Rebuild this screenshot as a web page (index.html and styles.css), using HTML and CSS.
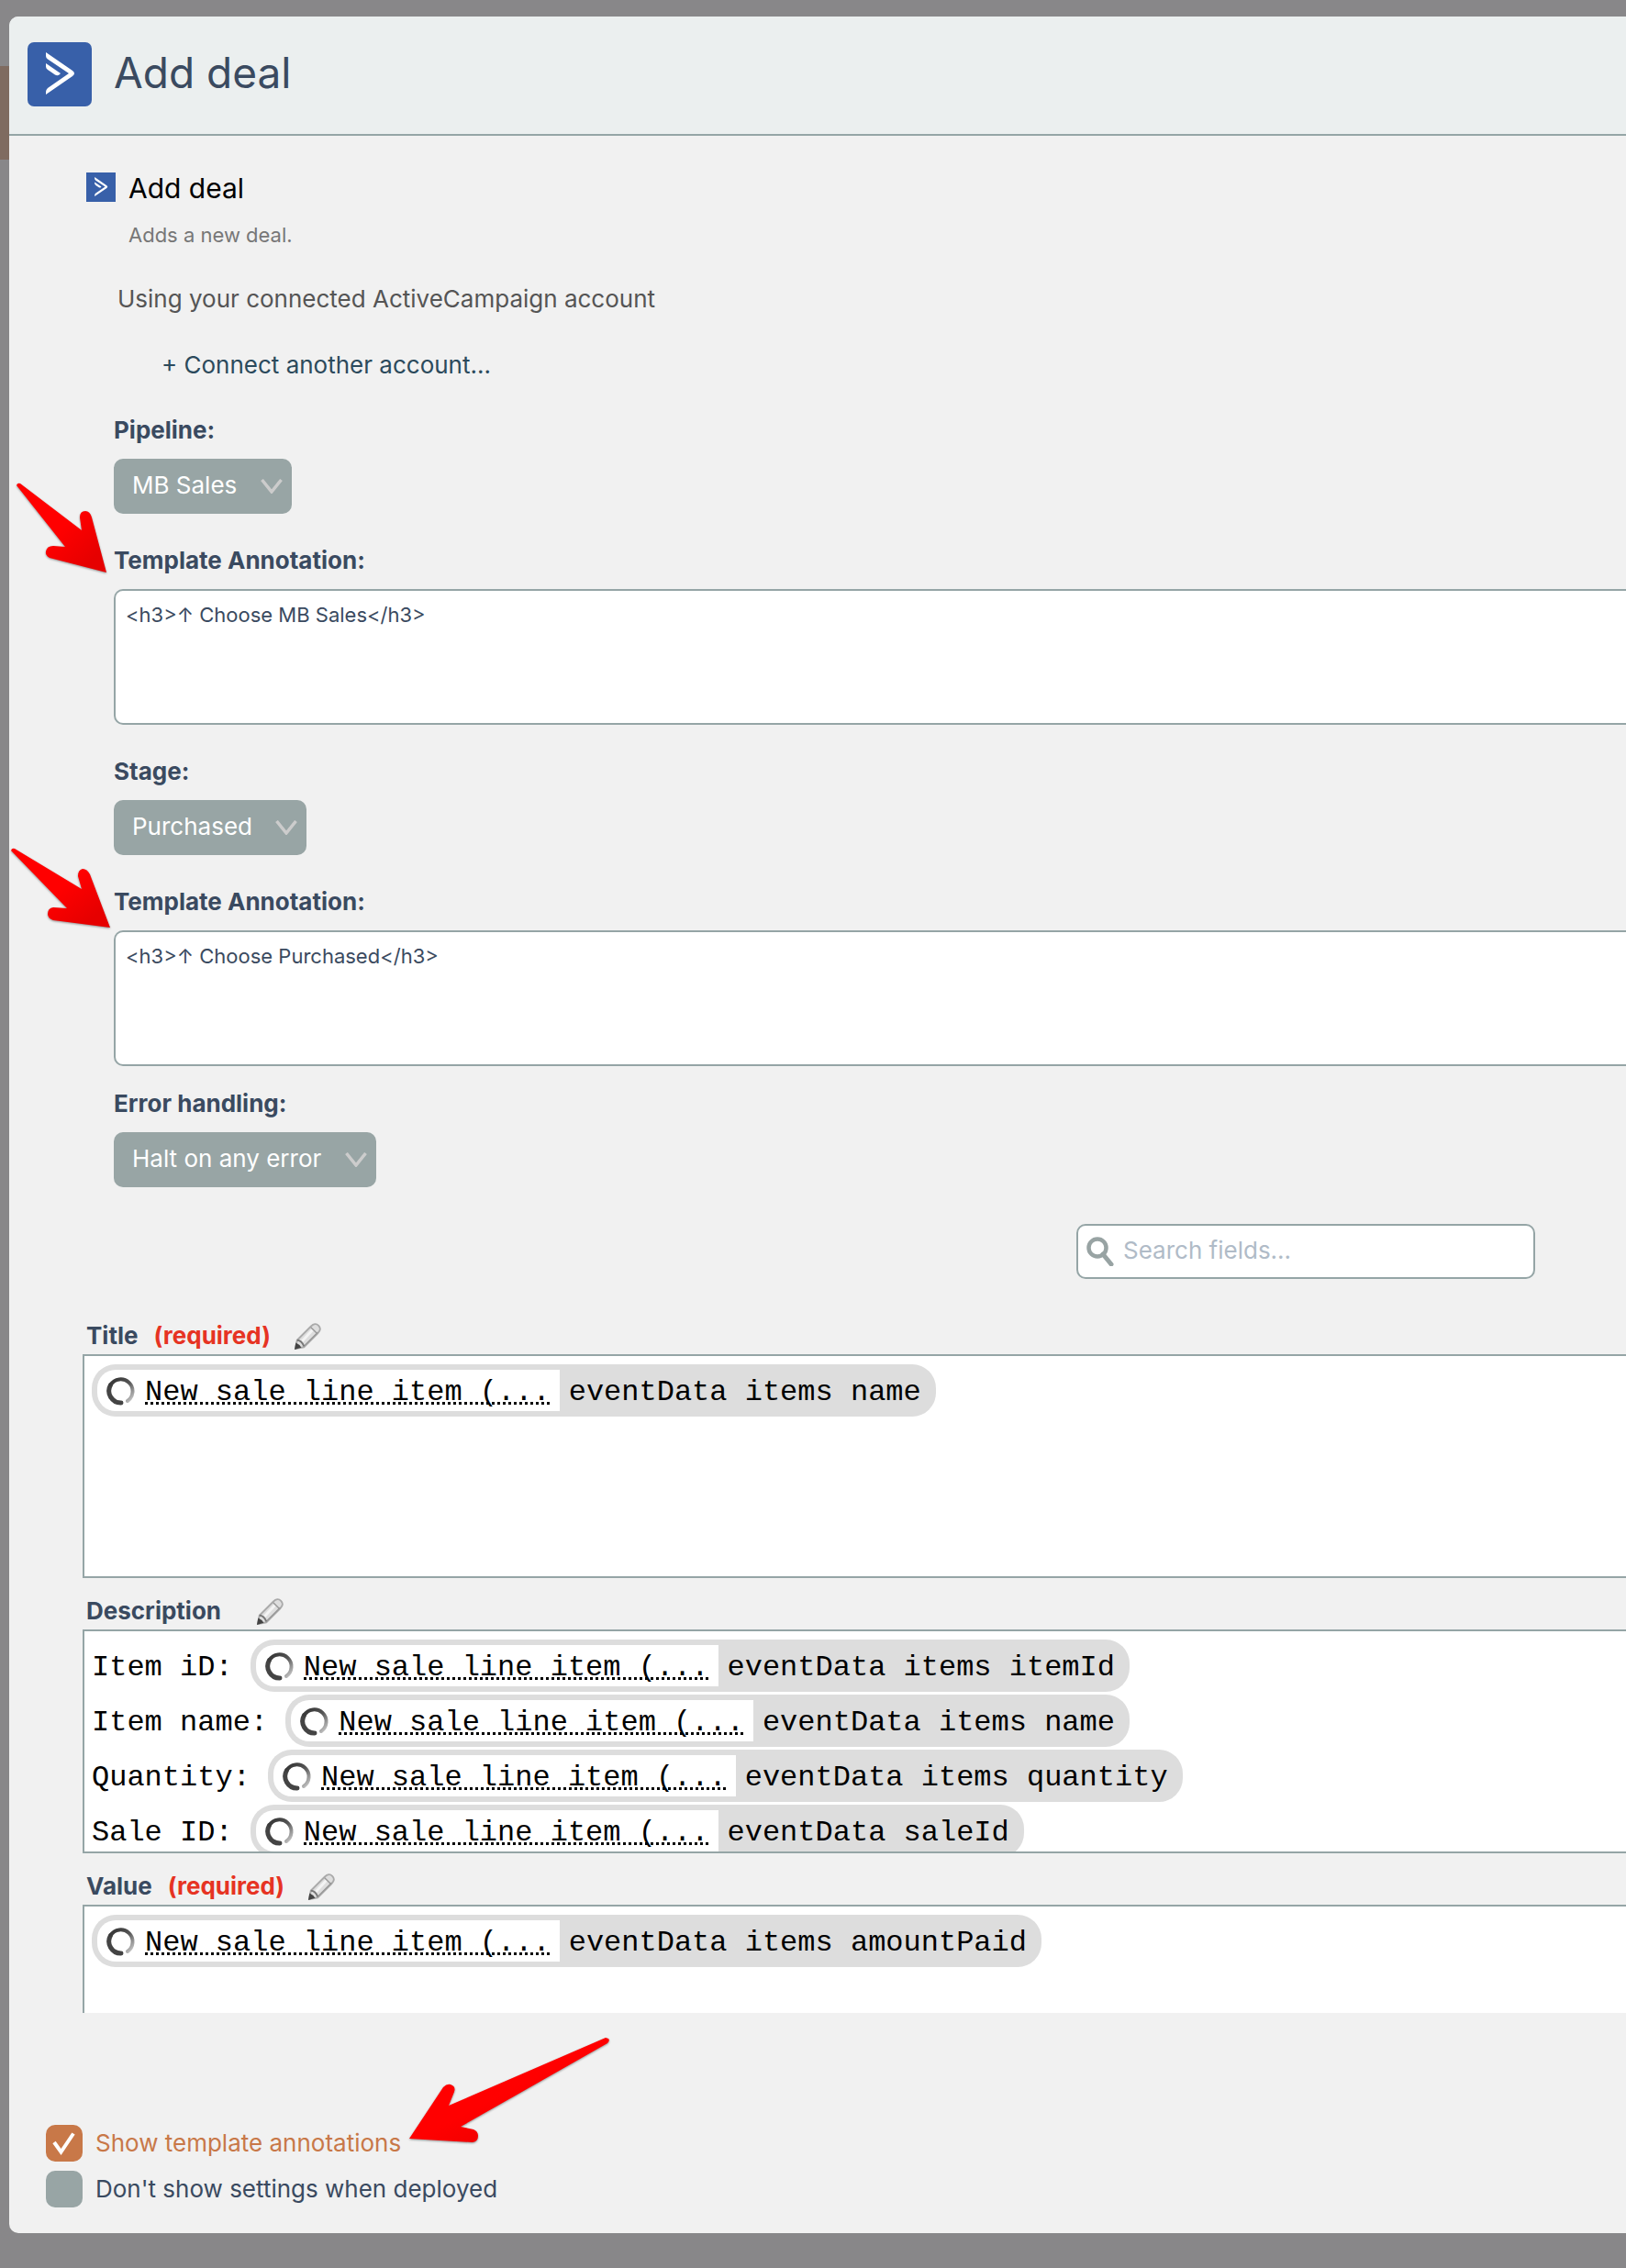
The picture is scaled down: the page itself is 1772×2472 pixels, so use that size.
FILE: index.html
```
<!DOCTYPE html>
<html lang="en">
<head>
<meta charset="utf-8">
<meta name="viewport" content="width=device-width, initial-scale=1">
<title>Add deal</title>
<link rel="stylesheet" href="styles.css">
</head>
<body>
<svg class="defs" width="0" height="0" aria-hidden="true">
  <defs>
    <linearGradient id="spin" x1="0" y1="0" x2="1" y2="1">
      <stop offset="0" stop-color="#333"/>
      <stop offset="0.5" stop-color="#555"/>
      <stop offset="1" stop-color="#ccc"/>
    </linearGradient>
    <linearGradient id="red" x1="0" y1="0" x2="1" y2="1">
      <stop offset="0.5" stop-color="#ff0000"/>
      <stop offset="0.85" stop-color="#e60000"/>
    </linearGradient>
    <symbol id="logo" viewBox="0 0 70 70">
      <path fill="#fff" d="M20 11 49 31Q53 34 49 37L20 57V54Q20 52 22 50L45 34 22 18.500Q20 17 20 15Z"/>
      <path fill="#fff" d="M20 23 36 34 34.500 35.500Q32.500 37 30 35.500L22 30Q20 28.500 20 26.500Z"/>
    </symbol>
    <symbol id="chevron" viewBox="0 0 24 16">
      <path fill="none" stroke="#ccc" stroke-width="3.500" d="M1.500 1 12 14 22.500 1"/>
    </symbol>
    <symbol id="ring" viewBox="0 0 32 32">
      <path fill="none" stroke="#444" stroke-width="5" stroke-linecap="round" d="M16 29A13 13 0 0 1 4.500 9.500"/>
      <path fill="none" stroke="url(#spin)" stroke-width="4" stroke-linecap="round" d="M4.500 9.500A13 13 0 1 1 23 27"/>
    </symbol>
    <symbol id="pencil" viewBox="0 0 32 32">
      <path fill="#dedede" stroke="#aaa" stroke-width="2" stroke-linejoin="round" d="M2 30 4 20 20 4Q25 -1 29 3T28 12L12 28Z"/>
      <path fill="none" stroke="#f4f4f4" stroke-width="3" d="M10 21 22 8"/>
      <path fill="none" stroke="#999" stroke-width="1.500" d="M12 27 28 11M20 5 27 12"/>
      <path fill="none" stroke="#777" stroke-width="2" d="M4 20Q9 20 12 27"/>
      <path fill="#444" d="M1 31 2.500 23Q7 25 9 28.500Z"/>
    </symbol>
  </defs>
</svg>

<main class="modal">
  <header class="modal-head">
    <svg class="logo logo-large" aria-hidden="true"><use href="#logo"/></svg>
    <h1 class="modal-title">Add deal</h1>
  </header>

  <section class="intro">
    <svg class="logo logo-small" aria-hidden="true"><use href="#logo"/></svg>
    <div class="intro-text">
      <h2 class="intro-title">Add deal</h2>
      <p class="intro-note">Adds a new deal.</p>
    </div>
  </section>

  <form class="settings">
    <p class="account">Using your connected ActiveCampaign account</p>
    <a class="connect" href="#connect">+ Connect another account...</a>

    <div class="setting">
      <label class="label" for="pipeline">Pipeline:</label>
      <span class="picker"><select id="pipeline"><option>MB Sales</option></select><svg class="chevron" aria-hidden="true"><use href="#chevron"/></svg></span>
    </div>
    <div class="setting">
      <label class="label" for="note-pipeline">Template Annotation:</label>
      <textarea class="note" id="note-pipeline">&lt;h3&gt;↑ Choose MB Sales&lt;/h3&gt;</textarea>
    </div>
    <div class="setting">
      <label class="label" for="stage">Stage:</label>
      <span class="picker"><select id="stage"><option>Purchased</option></select><svg class="chevron" aria-hidden="true"><use href="#chevron"/></svg></span>
    </div>
    <div class="setting">
      <label class="label" for="note-stage">Template Annotation:</label>
      <textarea class="note" id="note-stage">&lt;h3&gt;↑ Choose Purchased&lt;/h3&gt;</textarea>
    </div>
    <div class="setting setting-close">
      <label class="label" for="errors">Error handling:</label>
      <span class="picker"><select id="errors"><option>Halt on any error</option></select><svg class="chevron" aria-hidden="true"><use href="#chevron"/></svg></span>
    </div>
  </form>

  <label class="search">
    <svg class="search-icon" viewBox="0 0 30 32" aria-hidden="true"><circle cx="12" cy="12" r="9.500" fill="none" stroke="#98a3a3" stroke-width="4.500"/><path d="M18 19 27 30" stroke="#98a3a3" stroke-width="5" stroke-linecap="round"/></svg>
    <input class="search-input" type="search" placeholder="Search fields..." aria-label="Search fields">
  </label>

  <section class="fields">
    <div class="field">
      <div class="field-head"><h3 class="field-name">Title</h3><span class="required">(required)</span><button class="edit" type="button" aria-label="Edit title"><svg class="pencil"><use href="#pencil"/></svg></button></div>
      <div class="box">
        <div class="line"><span class="token"><span class="source"><svg class="ring" aria-hidden="true"><use href="#ring"/></svg><span class="source-name">New sale line item (...</span></span><span class="path">eventData items name</span></span></div>
      </div>
    </div>
    <div class="field">
      <div class="field-head"><h3 class="field-name">Description</h3><span class="required"></span><button class="edit" type="button" aria-label="Edit description"><svg class="pencil"><use href="#pencil"/></svg></button></div>
      <div class="box">
        <div class="line"><span class="lead">Item iD: </span><span class="token"><span class="source"><svg class="ring" aria-hidden="true"><use href="#ring"/></svg><span class="source-name">New sale line item (...</span></span><span class="path">eventData items itemId</span></span></div>
        <div class="line"><span class="lead">Item name: </span><span class="token"><span class="source"><svg class="ring" aria-hidden="true"><use href="#ring"/></svg><span class="source-name">New sale line item (...</span></span><span class="path">eventData items name</span></span></div>
        <div class="line"><span class="lead">Quantity: </span><span class="token"><span class="source"><svg class="ring" aria-hidden="true"><use href="#ring"/></svg><span class="source-name">New sale line item (...</span></span><span class="path">eventData items quantity</span></span></div>
        <div class="line"><span class="lead">Sale ID: </span><span class="token"><span class="source"><svg class="ring" aria-hidden="true"><use href="#ring"/></svg><span class="source-name">New sale line item (...</span></span><span class="path">eventData saleId</span></span></div>
      </div>
    </div>
    <div class="field">
      <div class="field-head"><h3 class="field-name">Value</h3><span class="required">(required)</span><button class="edit" type="button" aria-label="Edit value"><svg class="pencil"><use href="#pencil"/></svg></button></div>
      <div class="box box-cut">
        <div class="line"><span class="token"><span class="source"><svg class="ring" aria-hidden="true"><use href="#ring"/></svg><span class="source-name">New sale line item (...</span></span><span class="path">eventData items amountPaid</span></span></div>
      </div>
    </div>
  </section>

  <footer class="options">
    <label class="option option-on"><input class="tick" type="checkbox" checked><svg class="check" viewBox="0 0 40 40" aria-hidden="true"><path fill="none" stroke="#fff" stroke-width="4" d="M9 19 16.500 29.500 30 9.500"/></svg><span>Show template annotations</span></label>
    <label class="option"><input class="tick" type="checkbox"><span>Don't show settings when deployed</span></label>
  </footer>
</main>

<svg class="arrow arrow-pipeline" viewBox="0 0 100 98" aria-hidden="true"><path fill="url(#red)" d="M1 3Q2 0 5 1L72 52 70 38Q70 31 76 31 81 31 83 38L99 98 37 82Q32 79 33 75 34 69 41 69L54 70Z"/></svg>
<svg class="arrow arrow-stage" viewBox="0 0 108 88" aria-hidden="true"><path fill="url(#red)" d="M0 3Q1 0 4 1L77 45 73 31Q73 24 78 23 83 23 86 29L108 87 46 79Q40 77 40 72 40 66 46 65L61 66Z"/></svg>
<svg class="arrow arrow-option" viewBox="0 0 218 114" aria-hidden="true"><path fill="url(#red)" d="M217 1Q219 3 216 6L56 97 70 100Q75 102 75 107 75 113 69 114L0 110 37 54Q41 50 45 51 51 53 49 59L43 74 214 0Z"/></svg>
</body>
</html>
```
FILE: styles.css
```
* { box-sizing: border-box; }

body {
  position: relative;
  margin: 0;
  padding: 18px 0 38px 10px;
  overflow-x: hidden;
  background: #888789;
  color: #3a4a60;
  font: 26px/32px Inter, "Liberation Sans", sans-serif;
}

/* strip of the page behind the dialog */
body::before {
  content: "";
  position: absolute;
  left: 0;
  top: 72px;
  width: 10px;
  height: 102px;
  background: #7f6b60;
}

h1, h2, h3, p { margin: 0; }
.defs { position: absolute; }
svg { display: block; }

.modal {
  display: flex;
  flex-direction: column;
  background: #f1f1f1;
  border-radius: 10px 0 0 10px;
}

.modal-head {
  display: flex;
  align-items: center;
  gap: 24px;
  height: 130px;
  padding: 0 20px 2px;
  background: #ebefef;
  border-bottom: 2px solid #95a5a6;
  border-radius: 10px 0 0 0;
}

.logo { flex: none; background: #3860a9; }
.logo-large { width: 70px; height: 70px; border-radius: 7px; }
.logo-small { width: 32px; height: 32px; }

.modal-title {
  padding-bottom: 4px;
  font-size: 46px;
  line-height: 56px;
  font-weight: 400;
}

.intro { display: flex; gap: 14px; padding: 40px 84px 0; }
.intro-title { font-size: 30px; line-height: 34px; font-weight: 400; color: #000; }
.intro-note { margin-top: 20px; font-size: 22px; line-height: 28px; color: #777; }

.settings {
  display: flex;
  flex-direction: column;
  align-items: flex-start;
  padding: 40px 0 0 114px;
}
.account { padding-left: 4px; color: #555; }
.connect {
  margin: 40px 0 4px;
  padding-left: 52px;
  color: #2c4a5c;
  text-decoration: none;
}

.setting {
  display: flex;
  flex-direction: column;
  align-items: flex-start;
  gap: 15px;
  width: 100%;
  margin-top: 35px;
}
.setting-close { margin-top: 25px; }
.label { font-weight: 700; }

.picker { display: grid; align-items: center; }
.picker > * { grid-area: 1 / 1; }
.picker select {
  appearance: none;
  height: 60px;
  margin: 0;
  padding: 0 59px 2px 20px;
  border: 0;
  border-radius: 10px;
  background: #98a5a5;
  color: #fff;
  font: inherit;
}
.chevron {
  width: 24px;
  height: 16px;
  margin-right: 10px;
  justify-self: end;
  pointer-events: none;
}

.note {
  display: block;
  width: 100%;
  height: 148px;
  padding: 12px 11px;
  border: 2px solid #95a5a6;
  border-right: 0;
  border-radius: 10px 0 0 10px;
  background: #fff;
  color: inherit;
  font: 22px/28px Inter, "Liberation Sans", sans-serif;
  resize: none;
}

.search {
  display: flex;
  align-items: center;
  gap: 10px;
  align-self: flex-end;
  width: 500px;
  height: 60px;
  margin: 40px 99px 0 0;
  padding: 0 9px;
  border: 2px solid #95a5a6;
  border-radius: 10px;
  background: #fff;
}
.search-icon { flex: none; width: 30px; height: 32px; }
.search-input {
  flex: 1;
  min-width: 0;
  padding: 0 0 2px;
  border: 0;
  outline: 0;
  background: none;
  font: inherit;
}
.search-input::placeholder { color: #b0bbc7; opacity: 1; }

.fields { padding: 26px 0 0 80px; }
.field-head {
  display: flex;
  align-items: flex-end;
  height: 56px;
  padding: 0 4px 4px;
}
.field-name { font-size: 26px; line-height: 32px; }
.required { margin: 0 24px 0 17px; color: #e63323; font-weight: 700; }
.required:empty { margin-right: 20px; }
.edit { padding: 0; border: 0; background: none; }
.pencil { width: 32px; height: 30px; }

.box {
  height: 244px;
  padding: 8px;
  overflow: hidden;
  border: 2px solid #95a5a6;
  border-right: 0;
  background: #fff;
  color: #000;
  font: 32px/40px "Liberation Mono", "Courier New", monospace;
}
.box-cut { height: 118px; border-bottom: 0; }

.line { display: flex; align-items: flex-start; height: 60px; padding-top: 1px; white-space: pre; }
.lead { padding-top: 11px; }
.token {
  display: flex;
  padding: 6px 16px 6px 6px;
  border-radius: 26px;
  background: #ddd;
}
.source {
  display: flex;
  align-items: center;
  gap: 10px;
  height: 45px;
  padding: 0 10px;
  border-radius: 20px 0 0 20px;
  background: #fff;
}
.ring { width: 32px; height: 32px; }
.source-name {
  height: 45px;
  padding-top: 5px;
  background: repeating-linear-gradient(90deg, #000 0 3px, transparent 3px 6px) 0 35px / 100% 3px no-repeat;
}
.path { padding: 5px 0 0 10px; }

.options {
  display: flex;
  flex-direction: column;
  align-items: flex-start;
  gap: 10px;
  padding: 122px 40px 28px;
}
.option {
  display: grid;
  grid-template-columns: 40px auto;
  align-items: center;
  column-gap: 14px;
}
.option-on { color: #c87848; }
.tick {
  appearance: none;
  grid-area: 1 / 1;
  width: 40px;
  height: 40px;
  margin: 0;
  border-radius: 10px;
  background: #98a5a5;
}
.tick:checked { background: #c87848; }
.check { grid-area: 1 / 1; width: 40px; height: 40px; pointer-events: none; z-index: 1; }

/* pointers laid over the dialog */
.arrow { position: absolute; filter: drop-shadow(0 1px 1px #0006); pointer-events: none; }
.arrow-pipeline { left: 17px; top: 526px; width: 100px; height: 98px; }
.arrow-stage { left: 12px; top: 924px; width: 108px; height: 88px; }
.arrow-option { left: 446px; top: 2221px; width: 218px; height: 114px; }
```
